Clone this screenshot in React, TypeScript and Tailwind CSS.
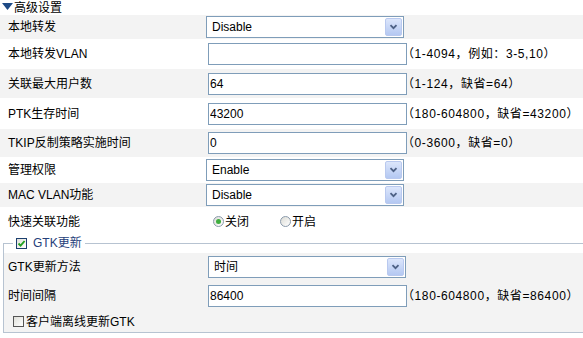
import type { ReactNode } from 'react';

function Select({ value }: { value: string }) {
  return (
    <div className="relative flex h-[22px] w-[198px] items-center border border-[#7f9db9] bg-white pl-[5px]">
      <span className="leading-none">{value}</span>
      <div className="absolute right-[1px] top-[1px] flex h-[18px] w-[17px] items-center justify-center rounded-[2px] border border-[#b9c9ef] bg-gradient-to-b from-[#dce6fb] to-[#b4c8f2]">
        <svg width="9" height="6" viewBox="0 0 9 6">
          <path d="M1.5 1.2 L4.5 4.2 L7.5 1.2" fill="none" stroke="#4d6185" strokeWidth="1.8" />
        </svg>
      </div>
    </div>
  );
}

function TextInput({ value }: { value: string }) {
  return (
    <input
      readOnly
      value={value}
      className="h-[22px] w-[199px] border border-[#7f9db9] bg-white px-[1px] text-[12px] outline-none"
    />
  );
}

function Hint({ children }: { children: ReactNode }) {
  return <span className="ml-[-5px] whitespace-nowrap tracking-[0.6px]">{children}</span>;
}

function Row({
  label,
  gray,
  h,
  labelW = 'w-[206px] pl-[8px]',
  children,
}: {
  label: string;
  gray?: boolean;
  h: string;
  labelW?: string;
  children: ReactNode;
}) {
  return (
    <div className={`flex items-center ${h} ${gray ? 'bg-[#f3f3f3]' : 'bg-white'}`}>
      <div className={`shrink-0 ${labelW}`}>{label}</div>
      <div className="flex items-center">{children}</div>
    </div>
  );
}

function Radio({ checked, label }: { checked?: boolean; label: string }) {
  return (
    <label className="flex items-center gap-[1px]">
      <span className="flex h-[11px] w-[11px] items-center justify-center rounded-full border border-[#8a9aab] bg-gradient-to-br from-[#dcdcd6] to-white">
        {checked && <span className="h-[5px] w-[5px] rounded-full bg-[#3fae3f]" />}
      </span>
      <span>{label}</span>
    </label>
  );
}

function Checkbox({ checked }: { checked?: boolean }) {
  return (
    <span className="flex h-[11px] w-[11px] items-center justify-center border border-[#1c3f6e] bg-gradient-to-br from-[#e0e0da] to-white">
      {checked && (
        <svg width="9" height="9" viewBox="0 0 9 9">
          <path d="M1.5 4.5 L3.6 6.6 L7.6 2" fill="none" stroke="#21a121" strokeWidth="1.9" />
        </svg>
      )}
    </span>
  );
}

export default function App() {
  return (
    <div className="h-[338px] w-[583px] overflow-hidden bg-white font-['Liberation_Sans','Noto_Sans_CJK_SC',sans-serif] text-[12px] text-black">
      <div className="flex h-[15px] items-center pl-[2px]">
        <svg width="11" height="7" viewBox="0 0 11 7" className="mb-[2px]">
          <path d="M0 0 H11 L5.5 7 Z" fill="#1e4a86" />
        </svg>
        <span className="ml-[1px] leading-none">高级设置</span>
      </div>

      <Row label="本地转发" gray h="h-[24px]">
        <Select value="Disable" />
      </Row>
      <Row label="本地转发VLAN" h="h-[30px]">
        <span className="ml-[2px]" />
        <TextInput value="" />
        <Hint>（1-4094，例如：3-5,10）</Hint>
      </Row>
      <Row label="关联最大用户数" gray h="h-[29px]">
        <span className="ml-[2px]" />
        <TextInput value="64" />
        <Hint>（1-124，缺省=64）</Hint>
      </Row>
      <Row label="PTK生存时间" h="h-[31px]">
        <span className="ml-[2px]" />
        <TextInput value="43200" />
        <Hint>（180-604800，缺省=43200）</Hint>
      </Row>
      <Row label="TKIP反制策略实施时间" gray h="h-[28px]">
        <span className="ml-[2px]" />
        <TextInput value="0" />
        <Hint>（0-3600，缺省=0）</Hint>
      </Row>
      <Row label="管理权限" h="h-[26px]">
        <Select value="Enable" />
      </Row>
      <Row label="MAC VLAN功能" gray h="h-[24px]">
        <Select value="Disable" />
      </Row>
      <Row label="快速关联功能" h="h-[29px]">
        <div className="ml-[7px] flex items-center gap-[31px]">
          <Radio checked label="关闭" />
          <Radio label="开启" />
        </div>
      </Row>

      <fieldset className="ml-[3px] border border-r-0 border-[#b7c3d1]">
        <legend className="ml-[9px] px-[3px]">
          <span className="flex h-[14px] items-center gap-[6px] text-[#25407a]">
            <Checkbox checked />
            <span className="leading-none">GTK更新</span>
          </span>
        </legend>
        <div className="mt-[3px] bg-[#f3f3f3]">
          <Row label="GTK更新方法" gray h="h-[28px]" labelW="w-[204px] pl-[4px]">
            <Select value="时间" />
          </Row>
          <Row label="时间间隔" gray h="h-[30px]" labelW="w-[204px] pl-[4px]">
            <TextInput value="86400" />
            <Hint>（180-604800，缺省=86400）</Hint>
          </Row>
          <div className="flex h-[21px] items-center gap-[2px] pl-[9px]">
            <span className="[&>span]:border-[#555]">
              <Checkbox />
            </span>
            <span>客户端离线更新GTK</span>
          </div>
        </div>
      </fieldset>
    </div>
  );
}
